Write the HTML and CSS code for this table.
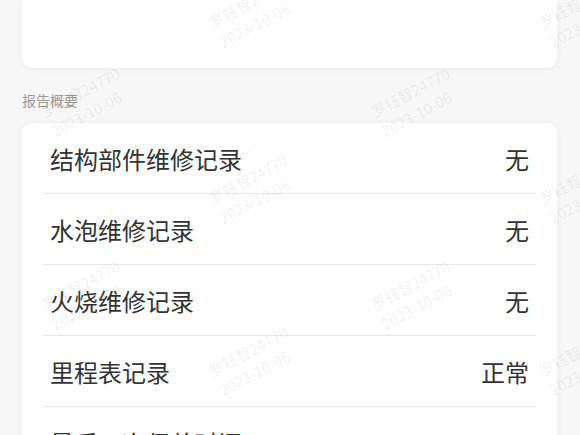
FILE: index.html
```html
<!DOCTYPE html>
<html lang="zh-CN">
<head>
<meta charset="utf-8">
<title>报告概要</title>
<link rel="stylesheet" href="styles.css">
</head>
<body>
<div class="page">
  <div class="card top-card"></div>
  <div class="section-title">报告概要</div>
  <div class="card list-card">
    <div class="row"><span class="label">结构部件维修记录</span><span class="value">无</span></div>
    <div class="row"><span class="label">水泡维修记录</span><span class="value">无</span></div>
    <div class="row"><span class="label">火烧维修记录</span><span class="value">无</span></div>
    <div class="row"><span class="label">里程表记录</span><span class="value">正常</span></div>
    <div class="row"><span class="label">最后一次保养时间</span><span class="value">2023-08-12</span></div>
  </div>
</div>
<div class="watermarks">
  <div class="wm" style="left:205px;top:14px">罗钰智24770<br>2023-10-06</div>
  <div class="wm" style="left:535px;top:14px">罗钰智24770<br>2023-10-06</div>
  <div class="wm" style="left:37px;top:103px">罗钰智24770<br>2023-10-06</div>
  <div class="wm" style="left:367px;top:103px">罗钰智24770<br>2023-10-06</div>
  <div class="wm" style="left:205px;top:190px">罗钰智24770<br>2023-10-06</div>
  <div class="wm" style="left:535px;top:190px">罗钰智24770<br>2023-10-06</div>
  <div class="wm" style="left:37px;top:296px">罗钰智24770<br>2023-10-06</div>
  <div class="wm" style="left:367px;top:296px">罗钰智24770<br>2023-10-06</div>
  <div class="wm" style="left:205px;top:362px">罗钰智24770<br>2023-10-06</div>
  <div class="wm" style="left:535px;top:362px">罗钰智24770<br>2023-10-06</div>
</div>
</body>
</html>
```
FILE: styles.css
```css
html, body {
  margin: 0;
  padding: 0;
}
body {
  background: #f7f7f7;
  font-family: "Noto Sans CJK SC", "Noto Sans", sans-serif;
  color: #333;
  overflow: hidden;
  height: 435px;
  position: relative;
}
.page {
  padding: 0 23px 0 22px;
}
.card {
  background: #fff;
  border-radius: 10px;
  box-shadow: 0 1px 6px rgba(0, 0, 0, 0.06);
}
.top-card {
  height: 68px;
  border-radius: 0 0 10px 10px;
}
.section-title {
  font-size: 14px;
  line-height: 20px;
  color: #999;
  margin: 22px 0 13px;
}
.list-card {
  padding: 0;
}
.row {
  height: 70px;
  margin: 0 21px;
  padding: 0 7px;
  border-bottom: 1px solid #e6e6e6;
  display: flex;
  align-items: center;
  justify-content: space-between;
  font-size: 24px;
}
.watermarks {
  position: absolute;
  inset: 0;
  pointer-events: none;
  overflow: hidden;
}
.wm {
  position: absolute;
  font-size: 15px;
  line-height: 22px;
  white-space: nowrap;
  color: rgba(0, 0, 0, 0.07);
  transform: rotate(-28deg);
  transform-origin: 0 0;
}
```
